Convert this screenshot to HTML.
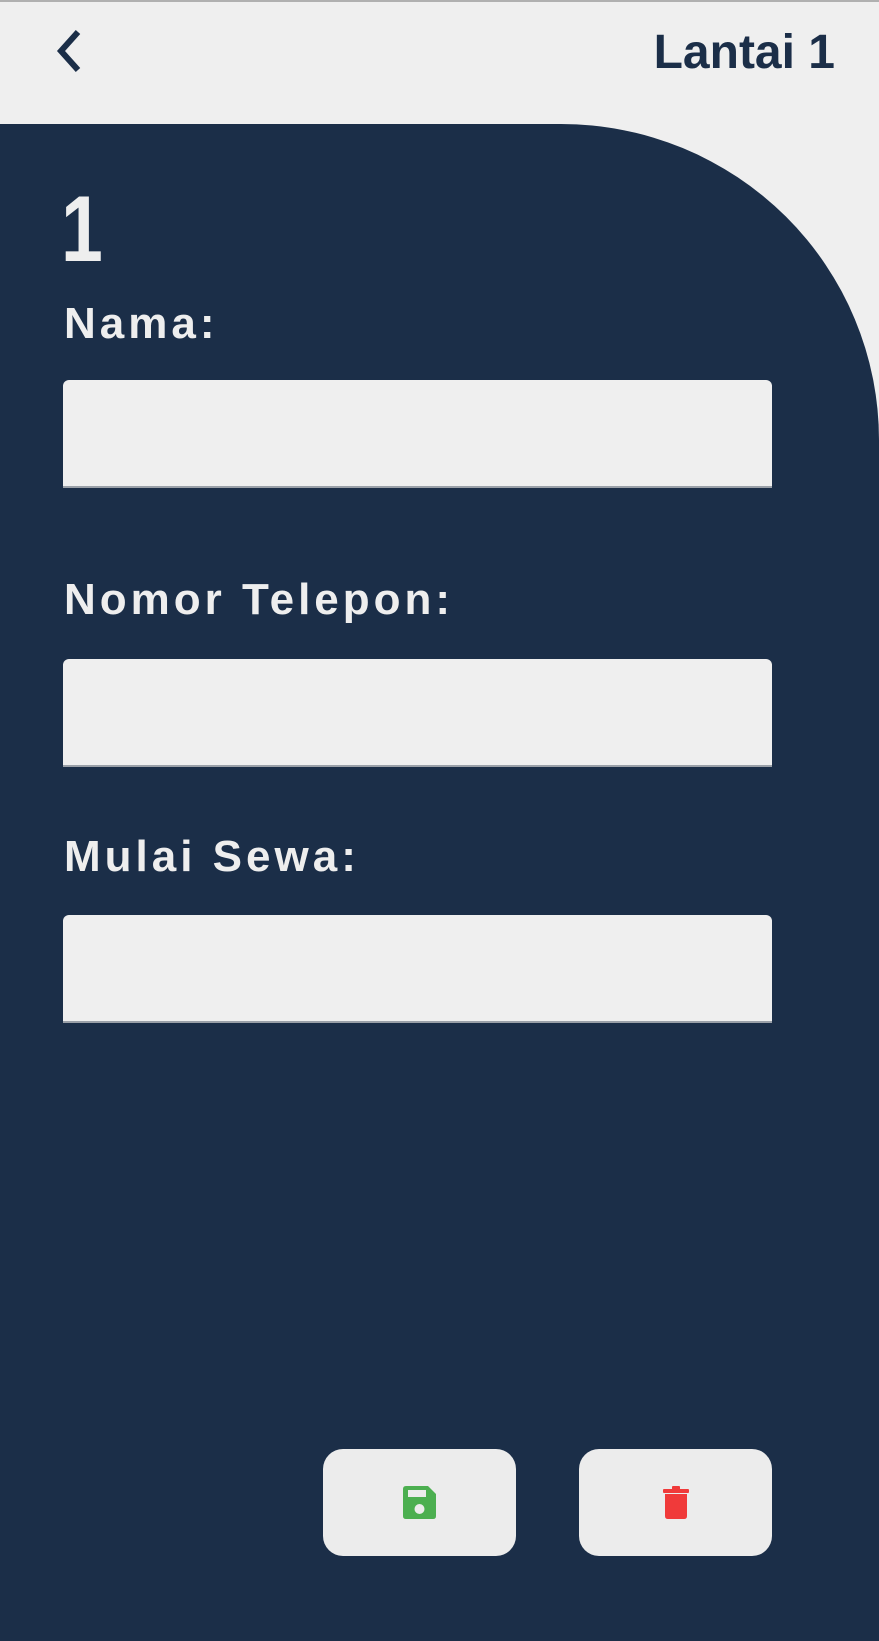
<!DOCTYPE html>
<html><head><meta charset="utf-8"><style>
*{margin:0;padding:0;box-sizing:border-box}
body{width:879px;height:1641px;background:#efefef;position:relative;overflow:hidden;font-family:"Liberation Sans",sans-serif;font-weight:bold}
.topline{position:absolute;left:0;top:0;width:879px;height:2px;background:#b0b0b0}
.panel{position:absolute;left:0;top:124px;width:879px;height:1517px;background:#1b2e48;border-top-right-radius:318px 316px}
.t{position:absolute;line-height:1;white-space:nowrap}
.lbl{color:#eeeeee;font-size:44px;left:64px;letter-spacing:4px}
.inp{position:absolute;left:63px;width:709px;height:108px;background:#efefef;border-radius:6px 6px 0 0;border-bottom:2px solid #9aa0a8}
.btn{position:absolute;top:1449px;width:193px;height:107px;background:#ececec;border-radius:20px}
</style></head><body>
<div class="topline"></div>
<svg style="position:absolute;left:52px;top:28px" width="34" height="46" viewBox="0 0 34 46"><path d="M26 4 L9 23 L26 42" fill="none" stroke="#1b2e48" stroke-width="6"/></svg>
<div class="t" style="right:44px;top:29px;font-size:48px;color:#1b2e48">Lantai 1</div>
<div class="panel"></div>
<div class="t" style="left:61px;top:182px;font-size:94px;color:#eeeeee;transform:scaleX(0.8);transform-origin:left">1</div>
<div class="t lbl" style="top:302px">Nama:</div>
<div class="inp" style="top:380px"></div>
<div class="t lbl" style="top:578px">Nomor Telepon:</div>
<div class="inp" style="top:659px"></div>
<div class="t lbl" style="top:835px">Mulai Sewa:</div>
<div class="inp" style="top:915px"></div>
<div class="btn" style="left:323px"></div>
<div class="btn" style="left:579px"></div>
<svg style="position:absolute;left:403px;top:1486px" width="33" height="33" viewBox="0 0 33 33"><path d="M3 0 H25 L33 8 V30 Q33 33 30 33 H3 Q0 33 0 30 V3 Q0 0 3 0Z" fill="#4caf50"/><rect x="5" y="4" width="18" height="7" fill="#ececec"/><circle cx="16.5" cy="23" r="5" fill="#ececec"/></svg>
<svg style="position:absolute;left:663px;top:1486px" width="26" height="33" viewBox="0 0 26 33"><rect x="0" y="3" width="26" height="4" rx="1" fill="#f03a3a"/><rect x="9" y="0" width="8" height="4" rx="1" fill="#f03a3a"/><path d="M2 8 H24 V30 Q24 33 21 33 H5 Q2 33 2 30Z" fill="#f03a3a"/></svg>
</body></html>
